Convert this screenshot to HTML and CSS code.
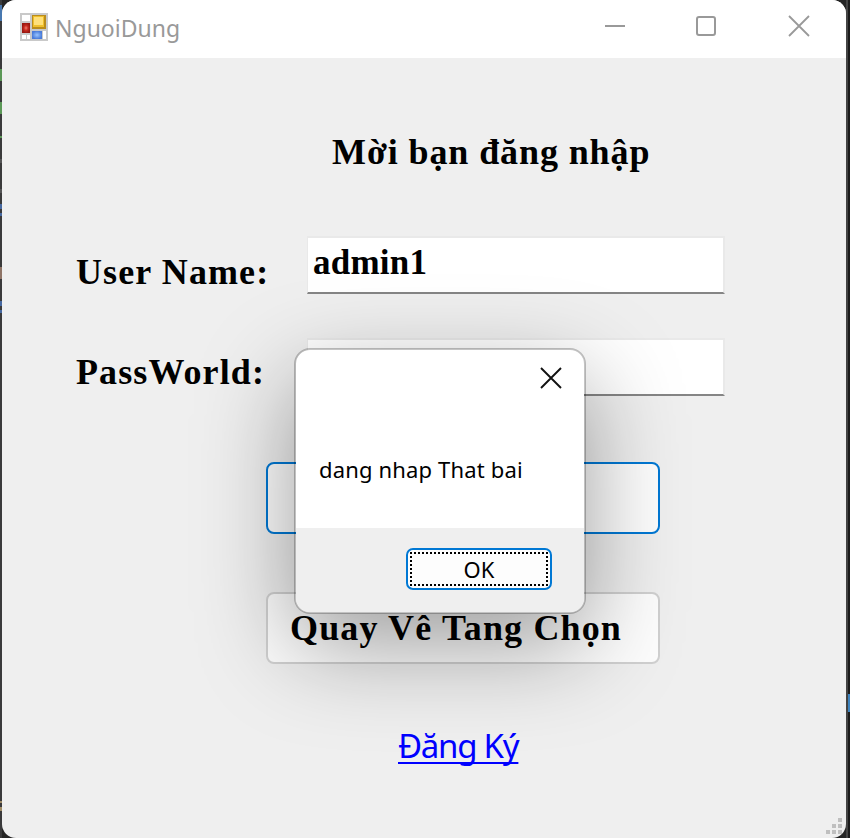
FILE: index.html
```html
<!DOCTYPE html>
<html lang="vi">
<head>
<meta charset="utf-8">
<title>NguoiDung</title>
<link rel="stylesheet" href="styles.css">
</head>
<body>
<div class="edge edge-left"></div>
<main class="window">
  <header class="titlebar">
    <svg class="app-icon" width="30" height="30" viewBox="0 0 30 30">
      <defs>
        <radialGradient id="red"><stop offset="0" stop-color="#f08070"/><stop offset=".5" stop-color="#c82b20"/><stop offset="1" stop-color="#991811"/></radialGradient>
        <radialGradient id="blue"><stop offset="0" stop-color="#99c5ff"/><stop offset="1" stop-color="#4a7cda"/></radialGradient>
      </defs>
      <path d="M3 1H31V29H3Z" fill="#c9c9c9"/>
      <path d="M5 3H13V9H5ZM5 23H9V27H5ZM10 23H13V27H10ZM26 19H29V27H26Z" fill="#fff"/>
      <path d="M15 3H29V17H15Z" fill="#b98c1c"/>
      <path d="M16 4H27V15H16Z" fill="#efbf2b"/><path d="M17 5H26V13H17Z" fill="#ffe07a"/>
      <path d="M5 11H13V21H5Z" fill="url(#red)"/>
      <path d="M15 19H25V27H15Z" fill="url(#blue)"/>
    </svg>
    <span class="caption">NguoiDung</span>
    <svg class="controls" width="206" height="24" viewBox="0 0 206 24" fill="none" stroke="#999" stroke-width="2">
      <path d="M0 12H20"/>
      <rect x="92" y="3" width="18" height="18" rx="2"/>
      <path d="M184 2L204 22M204 2L184 22" stroke-width="1.8"/>
    </svg>
  </header>
  <form class="form">
    <h1 class="heading">Mời bạn đăng nhập</h1>
    <div class="row">
      <label class="label name-label">User Name:</label>
      <div class="field">admin1</div>
    </div>
    <div class="row">
      <label class="label pass-label">PassWorld:</label>
      <div class="field"></div>
    </div>
    <div class="actions">
      <button class="button primary" type="button"></button>
      <button class="button" type="button"><span class="button-text">Quay Vê Tang Chọn</span></button>
      <a class="link">Đăng Ký</a>
    </div>
  </form>
  <svg class="grip" width="16" height="16" viewBox="0 0 16 16" fill="#bfbfbf">
    <path d="M12 0h4v4h-4zM6 6h4v4H6zM12 6h4v4h-4zM0 12h4v4H0zM6 12h4v4H6zM12 12h4v4h-4z"/>
  </svg>
  <section class="dialog">
    <svg class="close" width="22" height="22" viewBox="0 0 22 22" fill="none" stroke="#111" stroke-width="1.9"><path d="M1 1L21 21M21 1L1 21"/></svg>
    <div class="message"><span class="message-text">dang nhap That bai</span></div>
    <footer class="dialog-footer"><button class="ok" type="button"><span class="focus"><span class="ok-text">OK</span></span></button></footer>
  </section>
</main>
<div class="edge edge-right"></div>
</body>
</html>
```
FILE: styles.css
```css
* { box-sizing: border-box; }
body {
  margin: 0;
  width: 850px;
  height: 838px;
  overflow: hidden;
  display: grid;
  grid-template-columns: 2px 844px 4px;
  background: #252525;
  font-family: "Noto Sans", sans-serif;
}
.edge-left {
  background:
    linear-gradient(#4878b0, #4878b0) 0 5px / 2px 16px no-repeat,
    linear-gradient(#5b9857, #5b9857) 0 69px / 2px 12px no-repeat,
    linear-gradient(#5b9857, #5b9857) 0 102px / 2px 12px no-repeat,
    linear-gradient(#5b9857, #5b9857) 0 136px / 2px 2px no-repeat,
    linear-gradient(#555, #555) 0 159px / 2px 4px no-repeat,
    linear-gradient(#555, #555) 0 189px / 2px 4px no-repeat,
    linear-gradient(#4668a0, #4668a0) 0 204px / 2px 5px no-repeat,
    linear-gradient(#4668a0, #4668a0) 0 213px / 2px 3px no-repeat,
    linear-gradient(#8e7466, #8e7466) 0 267px / 2px 12px no-repeat,
    linear-gradient(#4668a0, #4668a0) 0 301px / 2px 5px no-repeat,
    linear-gradient(#4668a0, #4668a0) 0 310px / 2px 3px no-repeat,
    linear-gradient(#a08d68, #a08d68) 0 801px / 2px 2px no-repeat,
    linear-gradient(#a08d68, #a08d68) 0 807px / 2px 4px no-repeat,
    #3a3a3b;
}
.edge-right {
  background:
    linear-gradient(#3e83bd, #3e83bd) 2px 694px / 2px 18px no-repeat,
    linear-gradient(90deg, #444 0 2px, #1b1b1b 2px);
}
.window {
  position: relative;
  height: 838px;
  background: #efefef;
  border-radius: 14px;
  overflow: hidden;
}
.titlebar {
  height: 58px;
  background: #fff;
  display: flex;
  align-items: flex-start;
  padding: 12px 35px 0 15px;
}
.app-icon { overflow: visible; }
.caption {
  margin: 0 0 0 8px;
  font: 23px/32px "Noto Sans", sans-serif;
  color: #999;
}
.controls { margin: 2px 0 0 auto; }
.form {
  padding: 67px 0 0 75px;
  font-family: "Liberation Serif", serif;
  font-weight: bold;
  color: #000;
}
.heading {
  margin: 0 0 57px 255px;
  font-size: 36px;
  line-height: 54px;
  letter-spacing: .9px;
  white-space: nowrap;
}
.row {
  display: grid;
  grid-template-columns: 230px 418px;
  height: 58px;
  margin-bottom: 44px;
}
.label {
  margin-left: -1px;
  font-size: 36px;
  line-height: 40px;
  letter-spacing: 1.1px;
  padding-top: 16px;
}
.pass-label { padding-top: 14px; }
.field {
  background: #fff;
  border: 2px solid #e9e9e9;
  border-left-width: 1px;
  border-bottom-color: #858585;
  padding: 4px 0 0 5px;
  font-size: 35px;
  line-height: 42px;
  letter-spacing: .25px;
}
.actions {
  display: flex;
  flex-direction: column;
  margin: 66px 0 0 189px;
  width: 394px;
}
.button {
  height: 72px;
  margin-bottom: 58px;
  padding: 0 0 1px 22px;
  border: 2px solid #d0d0d0;
  border-radius: 8px;
  background: #fdfdfd;
  color: #000;
  text-align: left;
  font: bold 36px/50px "Liberation Serif", serif;
  letter-spacing: 1.15px;
  white-space: nowrap;
}
.button.primary { border-color: #0078d4; }
.link {
  align-self: flex-start;
  margin: -1px 0 0 132px;
  font: 33px/50px "Noto Sans", sans-serif;
  letter-spacing: -1.25px;
  color: #00f;
  text-decoration: underline;
  text-decoration-thickness: 2px;
  text-underline-offset: 4px;
  text-decoration-skip-ink: none;
  white-space: nowrap;
}
.grip { position: absolute; right: 4px; bottom: 4px; }
.dialog {
  position: absolute;
  left: 292px;
  top: 348px;
  width: 292px;
  height: 266px;
  display: flex;
  flex-direction: column;
  border: 2px solid rgba(0, 0, 0, .23);
  border-radius: 16px;
  background: #fff;
  background-clip: padding-box;
  box-shadow: 0 32px 96px rgba(0, 0, 0, .38);
}
.close { margin: 17px 22px 0 auto; }
.message {
  flex: 1;
  padding: 64px 0 0 23px;
  font-size: 22px;
  line-height: 32px;
  letter-spacing: .16px;
  white-space: nowrap;
}
.dialog-footer {
  height: 84px;
  padding: 20px 32px 0 0;
  display: flex;
  justify-content: flex-end;
  background: #efefef;
  border-radius: 0 0 14px 14px;
}
.ok {
  width: 146px;
  height: 42px;
  padding: 2px;
  border: 2px solid #0078d4;
  border-radius: 7px;
  background: #fdfdfd;
  color: #000;
  font: 22px/30px "Noto Sans", sans-serif;
}
.focus {
  display: block;
  height: 34px;
  border: 2px dotted #000;
}
```
